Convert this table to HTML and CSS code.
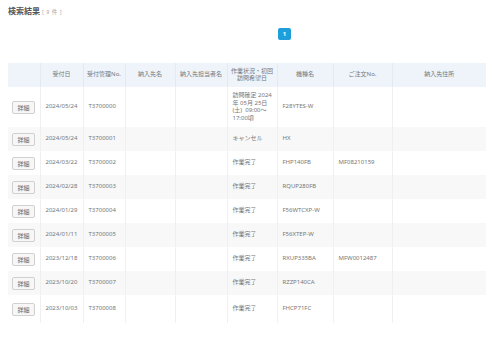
FILE: index.html
```html
<!DOCTYPE html>
<html lang="ja">
<head>
  <meta charset="UTF-8" />
  <title>検索結果</title>
  <link rel="stylesheet" href="styles.css">
</head>
<body>
  <div class="page">
    <div class="title-row">
      <h1>検索結果</h1>
      <span class="count">[ 9 件 ]</span>
    </div>

    <div class="pager">
      <span class="page-btn">1</span>
    </div>

    <table class="results">
      <colgroup>
        <col style="width:32px"><col style="width:43px"><col style="width:42px">
        <col style="width:50px"><col style="width:52px"><col style="width:50px">
        <col style="width:56px"><col style="width:59px"><col>
      </colgroup>
      <thead>
        <tr>
          <th></th>
          <th>受付日</th>
          <th>受付管理No.</th>
          <th>納入先名</th>
          <th>納入先担当者名</th>
          <th>作業状況・初回<br>訪問希望日</th>
          <th>機種名</th>
          <th>ご注文No.</th>
          <th>納入先住所</th>
        </tr>
      </thead>
      <tbody>
        <tr class="tall">
          <td class="act"><button>詳細</button></td>
          <td>2024/05/24</td><td>T3700000</td><td></td><td></td>
          <td>訪問確定 2024<br>年 05月 25日<br>(土)&nbsp; 09:00～<br>17:00頃</td>
          <td>F28YTES-W</td><td></td><td></td>
        </tr>
        <tr>
          <td class="act"><button>詳細</button></td>
          <td>2024/05/24</td><td>T3700001</td><td></td><td></td>
          <td>キャンセル</td><td>HX</td><td></td><td></td>
        </tr>
        <tr>
          <td class="act"><button>詳細</button></td>
          <td>2024/03/22</td><td>T3700002</td><td></td><td></td>
          <td>作業完了</td><td>FHP140FB</td><td>MF08210159</td><td></td>
        </tr>
        <tr>
          <td class="act"><button>詳細</button></td>
          <td>2024/02/28</td><td>T3700003</td><td></td><td></td>
          <td>作業完了</td><td>RQUP280FB</td><td></td><td></td>
        </tr>
        <tr>
          <td class="act"><button>詳細</button></td>
          <td>2024/01/29</td><td>T3700004</td><td></td><td></td>
          <td>作業完了</td><td>F56WTCXP-W</td><td></td><td></td>
        </tr>
        <tr>
          <td class="act"><button>詳細</button></td>
          <td>2024/01/11</td><td>T3700005</td><td></td><td></td>
          <td>作業完了</td><td>F56XTEP-W</td><td></td><td></td>
        </tr>
        <tr>
          <td class="act"><button>詳細</button></td>
          <td>2023/12/18</td><td>T3700006</td><td></td><td></td>
          <td>作業完了</td><td>RXUP335BA</td><td>MFW0012487</td><td></td>
        </tr>
        <tr>
          <td class="act"><button>詳細</button></td>
          <td>2023/10/20</td><td>T3700007</td><td></td><td></td>
          <td>作業完了</td><td>RZZP140CA</td><td></td><td></td>
        </tr>
        <tr class="last">
          <td class="act"><button>詳細</button></td>
          <td>2023/10/03</td><td>T3700008</td><td></td><td></td>
          <td>作業完了</td><td>FHCP71FC</td><td></td><td></td>
        </tr>
      </tbody>
    </table>
  </div>
</body>
</html>
```

FILE: styles.css
```css
* {
  box-sizing: border-box;
}
body {
  margin: 0;
  font-family: "Noto Sans", "Noto Sans CJK JP", sans-serif;
  background: #fff;
  color: #777;
}
.page {
  padding: 4px 6px 0 8px;
}
.title-row {
  display: flex;
  align-items: baseline;
  gap: 2px;
  height: 13px;
}
h1 {
  margin: 0;
  font-size: 8px;
  line-height: 13px;
  font-weight: bold;
  color: #555;
}
.count {
  font-size: 5.5px;
  color: #aaa;
  word-spacing: 1px;
}
.pager {
  display: flex;
  justify-content: center;
  padding-left: 75px;
  margin-top: 11px;
}
.page-btn {
  display: flex;
  align-items: center;
  justify-content: center;
  width: 13px;
  height: 12px;
  background: #1e9fdc;
  color: #fff;
  border-radius: 2px;
  font-size: 6px;
  font-weight: bold;
}
.results {
  width: 478px;
  margin-top: 23px;
  border-collapse: collapse;
  table-layout: fixed;
  font-size: 6px;
  line-height: 7.5px;
}
.results th {
  height: 24px;
  background: #eef4fa;
  color: #777;
  font-weight: normal;
  text-align: center;
  border-left: 1px solid #e2eaf2;
  padding: 0 2px;
}
.results th:first-child {
  border-left: none;
}
.results td {
  height: 24px;
  padding: 0 4px 0 5px;
  border-left: 1px solid #f0f0f0;
  vertical-align: middle;
  word-break: break-all;
}
.results td.act {
  border-left: none;
  padding: 0 4px;
}
.results tbody tr:nth-child(even) td {
  background: #f8f8f8;
}
.results tr.tall td {
  height: 40px;
}
.results tr.last td {
  height: 28px;
}
.results button {
  width: 23px;
  height: 13px;
  padding: 0;
  border: 1px solid #d0d0d0;
  border-radius: 2px;
  background: #f7f7f7;
  color: #666;
  font-family: inherit;
  font-size: 6px;
}
```
